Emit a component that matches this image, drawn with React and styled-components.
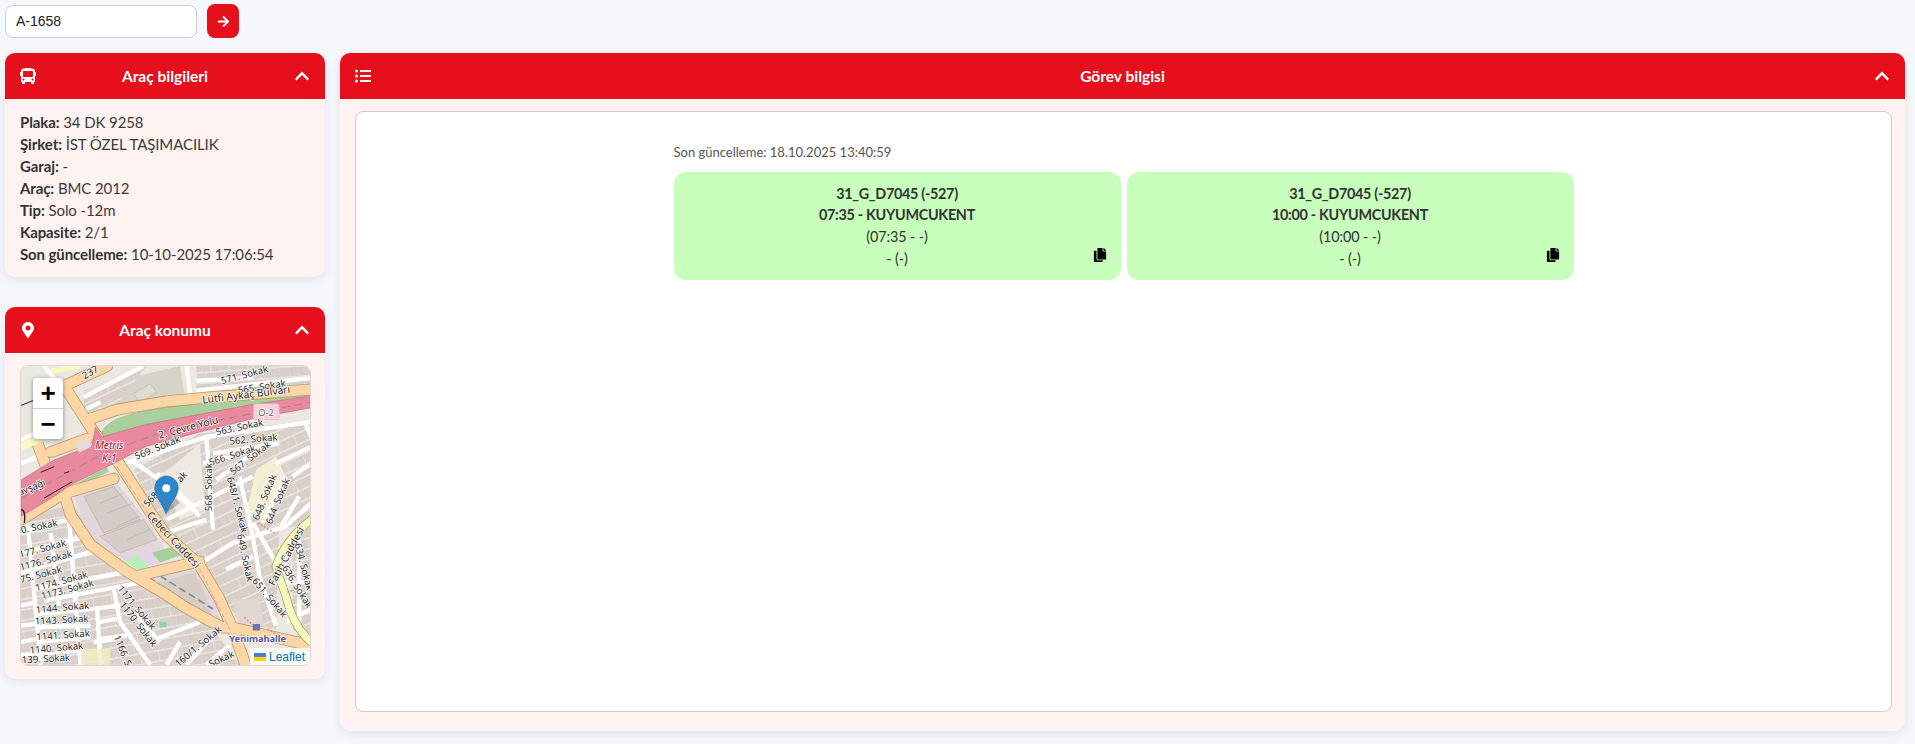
import { createGlobalStyle, styled } from 'styled-components'
import { FaArrowRight, FaBus, FaChevronUp, FaCopy, FaListUl, FaMapMarkerAlt } from 'react-icons/fa'

const RED = '#e60f1c'

const GlobalStyle = createGlobalStyle`
	html, body {
		margin: 0;
		background: #f5f7fb;
		font-family: Lato, "Open Sans", sans-serif;
		color: #333;
	}
`

const Page = styled.div`
	padding: 4px 10px 12px 5px;
`
const SearchRow = styled.form`
	display: flex;
	align-items: center;
	gap: 10px;
	margin-bottom: 15px;
`
const SearchInput = styled.input`
	width: 192px;
	height: 33px;
	box-sizing: border-box;
	padding: 0 10px;
	border: 1px solid #c9cdd4;
	border-radius: 8px;
	background: #fff;
	font: 14px "Liberation Sans", Arial, sans-serif;
	color: #222;
	outline: none;
`
const GoButton = styled.button`
	width: 32px;
	height: 34px;
	display: flex;
	align-items: center;
	justify-content: center;
	padding: 0;
	border: none;
	border-radius: 8px;
	background: ${RED};
	color: #fff;
	font-size: 13px;
`
const Columns = styled.div`
	display: grid;
	grid-template-columns: 320px 1fr;
	gap: 15px;
	align-items: start;
`
const LeftColumn = styled.div`
	display: flex;
	flex-direction: column;
	gap: 30px;
`
const Card = styled.section`
	border-radius: 10px;
	background: #fff3f2;
	box-shadow: 0 3px 10px rgba(90, 100, 130, 0.12);
	overflow: hidden;
`
const CardHeader = styled.header`
	height: 46px;
	display: flex;
	align-items: center;
	justify-content: space-between;
	padding: 0 15px;
	background: ${RED};
	color: #fff;
	font-size: 15.5px;
	font-weight: 700;
	svg {
		display: block;
	}
`
const InfoList = styled.div`
	padding: 12px 15px 12px;
	font-size: 15px;
	letter-spacing: -0.1px;
	line-height: 22px;
	color: #3a3a3a;
	b {
		color: #333;
	}
`
const MapBody = styled.div`
	padding: 12px 14px 13px 15px;
`
const MapFrame = styled.div`
	position: relative;
	height: 301px;
	border: 1px solid #e0d8d6;
	border-radius: 8px;
	box-sizing: border-box;
	overflow: hidden;
	svg {
		display: block;
	}
`
const ZoomControl = styled.div`
	position: absolute;
	top: 12px;
	left: 12px;
	width: 30px;
	border-radius: 4px;
	background: #fff;
	box-shadow: 0 1px 5px rgba(0, 0, 0, 0.4);
`
const ZoomButton = styled.div`
	height: 30px;
	display: flex;
	align-items: center;
	justify-content: center;
	font: bold 26px "Liberation Sans", Arial, sans-serif;
	color: #000;
	& + & {
		border-top: 1px solid #ccc;
	}
`
const Attribution = styled.div`
	position: absolute;
	right: 0;
	bottom: 0;
	display: flex;
	align-items: center;
	gap: 3px;
	padding: 0 5px 0 4px;
	height: 17px;
	background: rgba(255, 255, 255, 0.8);
	font: 12px "Liberation Sans", Arial, sans-serif;
	color: #0078a8;
`
const Flag = styled.span`
	width: 12px;
	height: 8px;
	background: linear-gradient(#4c7be1 50%, #ffd500 50%);
`
const TaskBody = styled.div`
	padding: 12px 13px 19px 15px;
`
const TaskBox = styled.div`
	height: 601px;
	box-sizing: border-box;
	padding-top: 29px;
	border: 1px solid #d8c8c8;
	border-radius: 8px;
	background: #fff;
`
const TaskInner = styled.div`
	width: 900px;
	margin: 0 auto;
`
const UpdatedAt = styled.div`
	height: 22px;
	margin-bottom: 9px;
	font-size: 13px;
	line-height: 22px;
	color: #555;
`
const TaskGrid = styled.div`
	display: grid;
	grid-template-columns: 447px 447px;
	gap: 6px;
`
const TaskCard = styled.div`
	position: relative;
	padding: 10.8px;
	border-radius: 12px;
	background: #c8ffbd;
	font-size: 14.4px;
	letter-spacing: -0.1px;
	line-height: 21.6px;
	text-align: center;
	color: #333;
`
const BoldLine = styled.div`
	font-weight: 700;
	letter-spacing: -0.3px;
`
const CopyIcon = styled.span`
	position: absolute;
	right: 14px;
	bottom: 18px;
	color: #000;
	font-size: 14px;
	line-height: 0;
`
const MapLabel = styled.text`
	font-family: "Noto Sans", sans-serif;
	font-size: ${({ $size }) => $size || 29}px;
	font-style: ${({ $italic }) => ($italic ? 'italic' : 'normal')};
	font-weight: ${({ $bold }) => ($bold ? 700 : 400)};
	fill: ${({ $color }) => $color || '#2b2b2b'};
	stroke: rgba(255, 255, 255, 0.85);
	stroke-width: 5px;
	paint-order: stroke;
	text-anchor: middle;
	dominant-baseline: central;
`

const labels = [
	['571. Sokak', 735, 252, -15],
	['565. Sokak', 787, 288, -9],
	['Lütfi Aykaç Bulvarı', 740, 311, -7, { $size: 31 }],
	['2. Çevre Yolu', 565, 410, -15, { $size: 31 }],
	['563. Sokak', 720, 410, -12],
	['562. Sokak', 762, 446, -5],
	['566. Sokak', 698, 495, -18],
	['567. Sokak', 752, 503, -38],
	['569. Sokak', 472, 472, -22],
	['Metris', 327, 466, 0, { $italic: true, $color: '#9c1c2c', $size: 31 }],
	['K-1', 327, 505, 0, { $italic: true, $color: '#9c1c2c', $size: 31 }],
	['avşağı', 92, 592, -22],
	['568. Sokak', 627, 592, -90],
	['648/1. Sokak', 714, 645, 75],
	['648. Sokak', 795, 622, -68],
	['644. Sokak', 835, 634, -68],
	['649. Sokak', 738, 805, 78],
	['Cebeci Caddesi', 522, 750, 47, { $size: 31 }],
	['Fatih Caddesi', 860, 800, -62, { $size: 31 }],
	['634. Sokak', 915, 832, 75],
	['636. Sokak', 895, 892, 58],
	['651. Sokak', 812, 925, 50],
	['0. Sokak', 115, 710, -12],
	['177. Sokak', 125, 777, -15],
	['1176. Sokak', 135, 813, -15],
	['75. Sokak', 120, 855, -15],
	['1174. Sokak', 182, 875, -15],
	['1173. Sokak', 200, 900, -15],
	['1144. Sokak', 185, 955, -5],
	['1143. Sokak', 183, 992, -3],
	['1141. Sokak', 187, 1038, -4],
	['1140. Sokak', 167, 1077, -5],
	['1139. Sokak', 127, 1110, -3],
	['1171. Sokak', 410, 955, 50],
	['1170. Sokak', 415, 1005, 52],
	['1166. S', 368, 1085, 68],
	['160/1. Sokak', 595, 1072, -40],
	['Sokak', 665, 1110, -25],
	['568', 452, 628, -48],
	['ak', 545, 560, -48],
	['237', 268, 243, -30, { $size: 30 }],
	['Yenimahalle', 775, 1050, 0, { $bold: true, $color: '#5557a8', $size: 28 }],
]

// white side streets, map coordinates are 3x the screen
const streets = [
	'M250,320 L430,226', 'M230,370 L300,335', 'M560,226 L575,340', 'M590,270 L760,262', 'M590,300 L936,262',
	'M360,525 L620,440 L936,395', 'M400,515 L520,600 L600,680', 'M620,440 L640,720', 'M500,690 L660,610 L760,560',
	'M470,550 L580,650', 'M640,490 L840,460', 'M650,570 L800,460', 'M480,735 L620,690', 'M590,830 L700,760 L860,710 L936,640',
	'M720,560 L760,740 L780,860', 'M680,840 L760,800', 'M760,700 L830,820', 'M780,860 L830,1010', 'M830,880 L930,880',
	'M860,560 L790,700', 'M920,400 L936,440', 'M900,620 L840,720', 'M610,520 L700,500', 'M830,520 L936,470', 'M880,560 L936,520',
	'M60,730 L200,690', 'M60,790 L240,745', 'M60,850 L330,770', 'M100,900 L370,850', 'M130,935 L420,880',
	'M105,975 L270,960', 'M105,1015 L270,1010', 'M105,1060 L270,1045', 'M60,1100 L240,1085', 'M80,700 L120,1128',
	'M205,690 L240,1128', 'M340,900 L360,1000 L450,1128', 'M400,970 L480,1060', 'M360,950 L270,960',
	'M470,1050 L600,1000', 'M560,1128 L640,1040', 'M620,1128 L690,1070', 'M130,226 L190,300', 'M60,450 L135,410', 'M60,520 L110,500',
	'M290,1000 L350,990', 'M280,1060 L350,1050', 'M300,1128 L290,960', 'M500,1128 L540,1060', 'M900,720 L900,1000', 'M860,1000 L936,960',
	'M150,730 L175,950', 'M60,950 L105,940', 'M60,1010 L105,1005', 'M60,1060 L105,1050', 'M380,1040 L300,1050',
]

const neighbourhoods = [
	['M60,690 L215,640 L360,850 L480,920 L640,1020 L720,1128 L60,1128 Z', 'rowsA'],
	['M600,430 L936,390 L936,700 L840,720 L830,1020 L720,1000 L670,920 L600,800 L480,700 L400,540 Z', 'rowsB'],
	['M590,226 L936,226 L936,280 L590,320 Z', 'rowsC'],
	['M250,300 L440,226 L330,370 L250,380 Z', 'rowsB'],
	['M880,720 L936,700 L936,1060 L880,1020 Z', 'rowsA'],
]

// brick layout so the houses do not read as long stripes
function HousePattern({ id, angle }) {
	return (
		<pattern id={id} width="56" height="64" patternUnits="userSpaceOnUse" patternTransform={`rotate(${angle})`}>
			<rect width="56" height="64" fill="#eae6df" />
			<g fill="#d9d0c9" stroke="#c6bcb4" strokeWidth="1">
				<rect x="2" y="3" width="24" height="25" />
				<rect x="29" y="3" width="24" height="25" />
				<rect x="-12" y="35" width="24" height="25" />
				<rect x="15" y="35" width="24" height="25" />
				<rect x="42" y="35" width="24" height="25" />
			</g>
		</pattern>
	)
}

function MapDrawing() {
	const mainRoads = 'M270,385 L350,358 L498,333 L640,320 L936,297 M190,286 L320,226 M190,286 L280,426 L360,526 L450,666 L498,736 L598,826 L658,926 L698,1016 L738,1128 M698,1016 L936,1070 M210,676 L270,766 L380,846 L498,916 L558,956 L668,1016 L698,1016 M60,690 L190,611 L340,566 M190,611 L210,676 M420,858 L598,816 M110,460 L150,570 M150,486 L260,446'
	return (
		<svg width="289" height="299" viewBox="60 226 873 903">
			<defs>
				<HousePattern id="rowsA" angle={-10} />
				<HousePattern id="rowsB" angle={-25} />
				<HousePattern id="rowsC" angle={-4} />
			</defs>
			<rect x="60" y="226" width="873" height="903" fill="#ebe7e1" />
			<path d="M310,280 L540,226 L555,320 L320,375 Z" fill="#d6d4c8" />
			{neighbourhoods.map(([d, fill]) => (
				<path key={d} d={d} fill={`url(#${fill})`} />
			))}
			<path d="M400,310 L450,280 L470,305 L420,335 Z" fill="#dfdcd0" stroke="#bfbcaf" strokeWidth="2" />
			<path d="M480,560 L600,460 L615,660 L540,690 Z" fill="#eeeae3" />
			<path d="M770,540 L830,500 L860,560 L800,700 L740,670 Z" fill="#f4f0d5" />
			<path d="M700,930 L780,930 L800,1030 L720,1020 Z" fill="#dfd8d2" />
			{streets.map(d => (
				<path key={d} d={d} fill="none" stroke="#fff" strokeWidth="13" />
			))}
			<path d="M215,608 L340,570 L440,690 L500,790 L415,840 L270,750 Z" fill="#e2d5dc" />
			<path d="M455,790 L530,768 L548,795 L480,820 Z" fill="#a5d09c" />
			<path d="M372,815 L415,800 L445,830 L415,845 Z" fill="#b5f0bb" />
			<path d="M415,800 L455,790 L480,820 L445,830 Z" fill="#e3d5e6" />
			<g fill="#d6cdc6" stroke="#b9aea6" strokeWidth="2">
				<path d="M250,620 L340,590 L420,690 L310,730 Z" />
				<path d="M300,740 L430,690 L470,750 L360,790 Z" />
			</g>
			<path d="M300,640 L370,610 M320,670 L400,640 M350,710 L420,680 M380,750 L450,720" stroke="#b9aea6" strokeWidth="2" fill="none" />
			<path d="M440,862 L565,825 L625,885 L667,1007 L590,970 Z" fill="#e2d5dc" />
			<path d="M470,880 L580,850 L610,900 L640,990 L550,930 Z" fill="#d6cdc6" />
			<path d="M445,865 L640,990 M480,860 L640,960" stroke="#888" strokeWidth="5" strokeDasharray="22 12" fill="none" />

			<path d="M300,441 C310,400 340,375 498,351 L640,336 L936,312 L936,350 L758,355 L500,402 Z" fill="#a9cf9c" stroke="#8cb784" strokeWidth="2" />
			<path d="M190,601 L320,531 L325,545 L200,607 Z" fill="#a9cf9c" />

			<g fill="none" strokeLinecap="round" strokeLinejoin="round">
				<path d={mainRoads} stroke="#bf9a68" strokeWidth="36" />
				<path d={mainRoads} stroke="#fcd6a4" strokeWidth="31" />
				<path d="M936,1060 Q880,1010 860,920 Q835,850 830,830 Q860,750 936,690" stroke="#a8aa60" strokeWidth="26" />
				<path d="M936,1060 Q880,1010 860,920 Q835,850 830,830 Q860,750 936,690" stroke="#f7fabf" strokeWidth="21" />
				<path d="M60,470 L120,445" stroke="#f7fabf" strokeWidth="22" />
				<path d="M160,240 L230,226" stroke="#f7fabf" strokeWidth="18" />
				<path d="M350,530 L450,680 L600,840 L690,1020" stroke="#b0a0b0" strokeWidth="2" strokeDasharray="14 8" />
			</g>
			<path d="M60,570 L160,510 L275,465 L285,411 L305,440 L440,402 L600,372 L760,342 L936,316 L936,352 L760,385 L600,425 L440,468 L340,520 L210,585 L160,620 L60,680 Z" fill="#e8899e" stroke="#c56b80" strokeWidth="2" />
			<path d="M60,625 L300,495 L500,420 L936,335" fill="none" stroke="#a8829a" strokeWidth="3" strokeDasharray="26 14" />
			<path d="M120,547 L160,530 M190,550 L205,545 M60,345 L110,325 M130,625 L215,575" stroke="#222" strokeWidth="3" fill="none" />
			<path d="M60,660 Q75,660 70,700" fill="none" stroke="#222" strokeWidth="4" />
			<rect x="762" y="340" width="78" height="48" rx="6" fill="#f5d3da" stroke="#e6b3c0" strokeWidth="2" />
			<path d="M225,455 L265,445 L272,470 L235,488 Z" fill="#e6d8e0" />
			<path d="M760,1005 h22 v20 h-22 Z" fill="#6d74b4" />
			<path d="M480,1000 h20 v15 h-20 Z" fill="#8ad8a8" />
			<path d="M735,985 l22,20 M805,1020 l22,14 M775,700 l50,30 M865,910 l55,-25" stroke="#e08a80" strokeWidth="5" strokeDasharray="5 6" fill="none" />
			<path d="M240,1080 h90 v48 h-90 Z" fill="#f3efc0" opacity="0.8" />
			{labels.map(([text, x, y, r, props]) => (
				<MapLabel key={`${text}-${x}`} x={x} y={y} transform={`rotate(${r} ${x} ${y})`} {...props}>
					{text}
				</MapLabel>
			))}
			<MapLabel x="800" y="365" $size={28} $color="#666">O-2</MapLabel>
			<path d="M497,672 L540,640 L515,610 L497,620 Z" fill="#000" opacity="0.22" />
			<path d="M499,558 C480,558 464,574 464,595 C464,618 488,645 498,672 C508,645 535,618 535,595 C535,574 518,558 499,558 Z" fill="#2e86c9" stroke="#2270ad" strokeWidth="2" />
			<circle cx="499" cy="595" r="12" fill="#fff" />
		</svg>
	)
}

function Panel({ icon, title, children }) {
	return (
		<Card>
			<CardHeader>
				{icon}
				<span>{title}</span>
				<FaChevronUp size={16} />
			</CardHeader>
			{children}
		</Card>
	)
}

function Info({ label, value }) {
	return (
		<div>
			<b>{label}:</b> {value}
		</div>
	)
}

function Task({ time }) {
	return (
		<TaskCard>
			<BoldLine>31_G_D7045 (-527)</BoldLine>
			<BoldLine>{time} - KUYUMCUKENT</BoldLine>
			<div>({time} - -)</div>
			<div>- (-)</div>
			<CopyIcon>
				<FaCopy />
			</CopyIcon>
		</TaskCard>
	)
}

export default function App() {
	return (
		<Page>
			<GlobalStyle />
			<SearchRow onSubmit={e => e.preventDefault()}>
				<SearchInput defaultValue="A-1658" />
				<GoButton type="submit">
					<FaArrowRight />
				</GoButton>
			</SearchRow>
			<Columns>
				<LeftColumn>
					<Panel icon={<FaBus size={16} />} title="Araç bilgileri">
						<InfoList>
							<Info label="Plaka" value="34 DK 9258" />
							<Info label="Şirket" value="İST ÖZEL TAŞIMACILIK" />
							<Info label="Garaj" value="-" />
							<Info label="Araç" value="BMC 2012" />
							<Info label="Tip" value="Solo -12m" />
							<Info label="Kapasite" value="2/1" />
							<Info label="Son güncelleme" value="10-10-2025 17:06:54" />
						</InfoList>
					</Panel>
					<Panel icon={<FaMapMarkerAlt size={16} />} title="Araç konumu">
						<MapBody>
							<MapFrame>
								<MapDrawing />
								<ZoomControl>
									<ZoomButton>+</ZoomButton>
									<ZoomButton>−</ZoomButton>
								</ZoomControl>
								<Attribution>
									<Flag />
									Leaflet
								</Attribution>
							</MapFrame>
						</MapBody>
					</Panel>
				</LeftColumn>
				<Panel icon={<FaListUl size={16} />} title="Görev bilgisi">
					<TaskBody>
						<TaskBox>
							<TaskInner>
								<UpdatedAt>Son güncelleme: 18.10.2025 13:40:59</UpdatedAt>
								<TaskGrid>
									<Task time="07:35" />
									<Task time="10:00" />
								</TaskGrid>
							</TaskInner>
						</TaskBox>
					</TaskBody>
				</Panel>
			</Columns>
		</Page>
	)
}
